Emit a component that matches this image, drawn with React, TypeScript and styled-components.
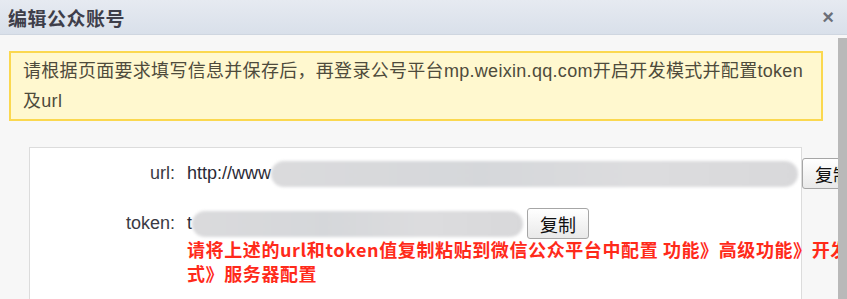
import styled, { createGlobalStyle } from 'styled-components';

const GlobalStyle = createGlobalStyle`
html, body {
  margin: 0;
  padding: 0;
  background: #f7f7f7;
  overflow: hidden;
}
body {
  font-family: "Liberation Sans", Arial, "Noto Sans CJK SC", sans-serif;
}
`

const Dialog = styled.div`
width: 847px;
height: 299px;
overflow: hidden;
display: flex;
flex-direction: column;
background: #f7f7f7;
`

const TitleBar = styled.div`
height: 34px;
flex: none;
display: flex;
align-items: center;
justify-content: space-between;
padding: 0 13px 0 8px;
background: linear-gradient(#e6eaf1, #d9e0ea);
border-bottom: 1px solid #cfd6e0;
`

const Title = styled.h1`
margin: 0;
font-size: 19px;
font-weight: bold;
color: #3e3e4a;
font-family: "Noto Sans CJK SC", sans-serif;
letter-spacing: 0.5px;
`

const Close = styled.span`
font-size: 20px;
font-weight: bold;
color: #6b6f78;
line-height: 1;
`

const Body = styled.div`
flex: 1;
display: flex;
min-height: 0;
`

const Content = styled.div`
flex: 1;
min-width: 0;
padding: 16px 15px 0 9px;
`

const Scrollbar = styled.div`
width: 9px;
flex: none;
margin-top: 3px;
background: #b9b9b9;
`

const Notice = styled.div`
border: 2px solid #fbd84f;
background: #fff8cf;
padding: 3px 10px 3px 12px;
font-size: 18px;
line-height: 30px;
letter-spacing: 0.3px;
color: #4e4b3c;
font-family: "Liberation Sans", Arial, "Noto Sans CJK SC", sans-serif;
`

const Panel = styled.div`
margin: 26px 0 0 20px;
width: 771px;
height: 200px;
background: #fff;
border: 1px solid #dcdcdc;
padding-top: 10px;
`

const Row = styled.div<{ $gap?: number }>`
display: grid;
grid-template-columns: 145px auto;
column-gap: 12px;
align-items: center;
margin-bottom: ${p => p.$gap ?? 0}px;
`

const Label = styled.span`
text-align: right;
font-size: 18px;
color: #3a3a44;
`

const Field = styled.div`
display: flex;
align-items: center;
white-space: nowrap;
`

const Value = styled.span`
font-size: 18px;
color: #2a2a36;
`

const Redacted = styled.span<{ $w: number }>`
display: inline-block;
width: ${p => p.$w}px;
height: 26px;
border-radius: 13px;
background: linear-gradient(90deg, #dadadc, #d5d7da 40%, #dcdcde 70%, #d8d8da);
filter: blur(1.5px);
`

const CopyButton = styled.button`
font-family: "Noto Sans CJK SC", sans-serif;
font-size: 18px;
color: #111;
height: 31px;
padding: 0 12px;
margin-left: 4px;
border: 1px solid #a6a6a6;
border-radius: 3px;
background: linear-gradient(#ffffff, #e9e9e9);
line-height: 1;
`

const Note = styled.p`
margin: -2px 0 0 157px;
width: 700px;
font-size: 18px;
line-height: 24px;
font-weight: bold;
letter-spacing: 0.6px;
color: #ff2a1a;
font-family: "Noto Sans CJK SC", "Liberation Sans", sans-serif;
`

function App(): JSX.Element {
  return (
    <>
      <GlobalStyle />
      <Dialog>
        <TitleBar>
          <Title>编辑公众账号</Title>
          <Close>×</Close>
        </TitleBar>
        <Body>
          <Content>
            <Notice>
              请根据页面要求填写信息并保存后，再登录公号平台mp.weixin.qq.com开启开发模式并配置token<br />及url
            </Notice>
            <Panel>
              <Row $gap={19}>
                <Label>url:</Label>
                <Field>
                  <Value>http://www</Value>
                  <Redacted $w={527} />
                  <CopyButton>复制</CopyButton>
                </Field>
              </Row>
              <Row>
                <Label>token:</Label>
                <Field>
                  <Value>t</Value>
                  <Redacted $w={331} />
                  <CopyButton>复制</CopyButton>
                </Field>
              </Row>
              <Note>
                请将上述的url和token值复制粘贴到微信公众平台中配置 功能》高级功能》开发模<br />
                式》服务器配置
              </Note>
            </Panel>
          </Content>
          <Scrollbar />
        </Body>
      </Dialog>
    </>
  );
};

export default App;
